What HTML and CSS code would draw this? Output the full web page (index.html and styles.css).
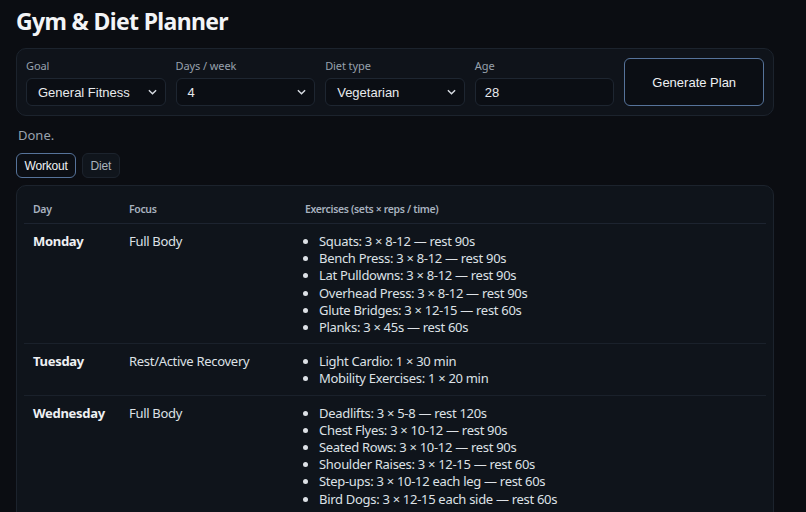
FILE: index.html
```html
<!DOCTYPE html>
<html>
<head>
<meta charset="utf-8">
<link rel="stylesheet" href="styles.css">
</head>
<body>
<div class="app">
  <h1 class="title">Gym &amp; Diet Planner</h1>
  <form class="panel">
    <label class="field">
      <span class="label">Goal</span>
      <span class="select"><span>General Fitness</span><svg class="chev" viewBox="0 0 10 6" width="9" height="6"><path d="M1 1l4 4 4-4" fill="none" stroke="#d8dce2" stroke-width="1.6"/></svg></span>
    </label>
    <label class="field">
      <span class="label">Days / week</span>
      <span class="select"><span>4</span><svg class="chev" viewBox="0 0 10 6" width="9" height="6"><path d="M1 1l4 4 4-4" fill="none" stroke="#d8dce2" stroke-width="1.6"/></svg></span>
    </label>
    <label class="field">
      <span class="label">Diet type</span>
      <span class="select"><span>Vegetarian</span><svg class="chev" viewBox="0 0 10 6" width="9" height="6"><path d="M1 1l4 4 4-4" fill="none" stroke="#d8dce2" stroke-width="1.6"/></svg></span>
    </label>
    <label class="field">
      <span class="label">Age</span>
      <span class="select input"><span>28</span></span>
    </label>
    <div class="btn">Generate Plan</div>
  </form>
  <div class="status">Done.</div>
  <div class="tabs">
    <span class="tab active">Workout</span>
    <span class="tab">Diet</span>
  </div>
  <div class="card">
    <table class="plan">
      <thead>
        <tr><th class="c-day">Day</th><th class="c-focus">Focus</th><th>Exercises (sets × reps / time)</th></tr>
      </thead>
      <tbody>
        <tr>
          <td class="day">Monday</td>
          <td>Full Body</td>
          <td><ul>
            <li>Squats: 3 × 8-12 — rest 90s</li>
            <li>Bench Press: 3 × 8-12 — rest 90s</li>
            <li>Lat Pulldowns: 3 × 8-12 — rest 90s</li>
            <li>Overhead Press: 3 × 8-12 — rest 90s</li>
            <li>Glute Bridges: 3 × 12-15 — rest 60s</li>
            <li>Planks: 3 × 45s — rest 60s</li>
          </ul></td>
        </tr>
        <tr>
          <td class="day">Tuesday</td>
          <td>Rest/Active Recovery</td>
          <td><ul>
            <li>Light Cardio: 1 × 30 min</li>
            <li>Mobility Exercises: 1 × 20 min</li>
          </ul></td>
        </tr>
        <tr>
          <td class="day">Wednesday</td>
          <td>Full Body</td>
          <td><ul>
            <li>Deadlifts: 3 × 5-8 — rest 120s</li>
            <li>Chest Flyes: 3 × 10-12 — rest 90s</li>
            <li>Seated Rows: 3 × 10-12 — rest 90s</li>
            <li>Shoulder Raises: 3 × 12-15 — rest 60s</li>
            <li>Step-ups: 3 × 10-12 each leg — rest 60s</li>
            <li>Bird Dogs: 3 × 12-15 each side — rest 60s</li>
          </ul></td>
        </tr>
      </tbody>
    </table>
  </div>
</div>
</body>
</html>
```
FILE: styles.css
```css
* { box-sizing: border-box; }
html, body { margin: 0; padding: 0; background: #0b0d12; }
body {
  font-family: "Noto Sans", "Open Sans", sans-serif;
  color: #e3e6ea;
  font-size: 13px;
}
.app { padding: 6px 16px 0 16px; width: 790px; height: 512px; overflow: hidden; }
.title {
  margin: 0 0 12px 0;
  font-size: 23px;
  line-height: 30px;
  font-weight: 700;
  letter-spacing: -0.65px;
  color: #f3f4f6;
}
.panel {
  margin: 0;
  display: grid;
  grid-template-columns: repeat(5, 1fr);
  column-gap: 10px;
  padding: 9px 9px 10px 9px;
  border: 1px solid #1c232d;
  border-radius: 10px;
  background: #0f131a;
  width: 758px;
  height: 68px;
}
.field { display: flex; flex-direction: column; }
.label {
  font-size: 11px;
  line-height: 14px;
  color: #97a1ad;
  margin: 1px 0 5px 0;
  letter-spacing: -0.1px;
}
.select {
  height: 28px;
  border: 1px solid #1e2631;
  border-radius: 6px;
  background: #0b0e14;
  display: flex;
  align-items: center;
  justify-content: space-between;
  padding: 0 8px 0 11px;
  font-family: "Liberation Sans", Arial, sans-serif;
  font-size: 13px;
  color: #e8eaed;
}
.input { padding-left: 9px; }
.chev { display: block; }
.btn {
  border: 1px solid #56739a;
  border-radius: 6px;
  background: #0b0e14;
  display: flex;
  align-items: center;
  justify-content: center;
  font-family: "Liberation Sans", Arial, sans-serif;
  font-size: 13px;
  color: #eef0f3;
  height: 48px;
}
.status {
  margin: 10px 0 0 2px;
  line-height: 18px;
  color: #9aa3ae;
  font-size: 13px;
}
.tabs { display: flex; gap: 6px; margin-top: 9px; }
.tab {
  height: 25px;
  display: flex;
  align-items: center;
  padding: 0 7.5px;
  border: 1px solid #1c232d;
  border-radius: 6px;
  background: #10151c;
  font-family: "Liberation Sans", Arial, sans-serif;
  font-size: 12px;
  letter-spacing: -0.2px;
  color: #a9b2bd;
}
.tab.active {
  border-color: #56739a;
  background: #0b0e14;
  color: #f0f2f5;
}
.card {
  margin-top: 7px;
  border: 1px solid #1c232d;
  border-radius: 10px;
  background: #0f141b;
  padding: 7px 7px 20px 7px;
  width: 758px;
}
.plan { width: 100%; border-collapse: collapse; }
.plan th {
  text-align: left;
  font-size: 10.5px;
  line-height: 14px;
  font-weight: 600;
  letter-spacing: -0.35px;
  color: #a7b1bf;
  padding: 9px 9px 7px 9px;
  border-bottom: 1px solid #1d2430;
}
.c-day { width: 96px; }
.c-focus { width: 176px; }
.plan td {
  vertical-align: top;
  padding: 9px 9px 7px 9px;
  line-height: 17.2px;
  letter-spacing: -0.3px;
  border-bottom: 1px solid #1a212b;
  color: #dde1e6;
}
.plan td.day { font-weight: 700; color: #eef0f3; }
.plan ul { margin: 0; padding-left: 14px; }
.plan li { line-height: 17.2px; }
```
